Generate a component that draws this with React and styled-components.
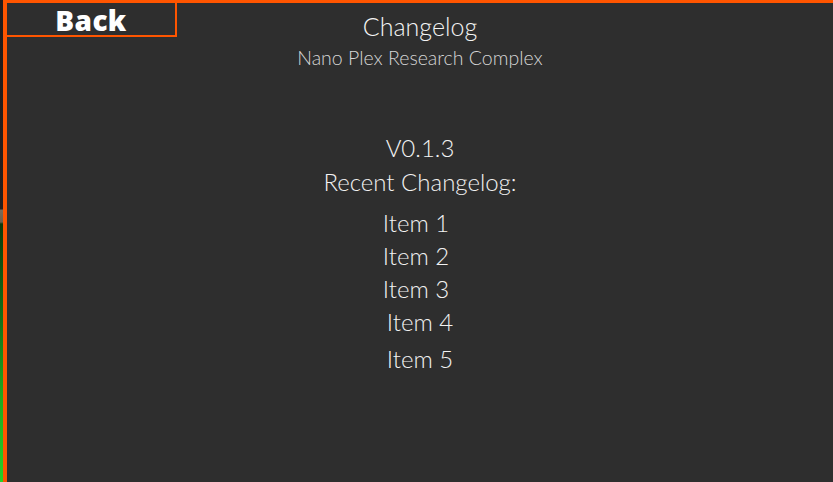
import React from "react";
import styled, { createGlobalStyle } from "styled-components";

const Global = createGlobalStyle`
  html, body { margin: 0; padding: 0; height: 100%; background: #1d1b1b; overflow: hidden; }
  #root { height: 100%; }
`;

const Page = styled.div`
  display: flex;
  height: 482px;
  width: 833px;
`;

const Scene = styled.div`
  width: 3px;
  flex: none;
  background: linear-gradient(
    to bottom,
    #1f1c1c 0,
    #221f1f 209px,
    #786c5a 210px,
    #6b604e 222px,
    #0c3a0c 224px,
    #12701a 320px,
    #1eaa20 400px,
    #26d029 482px
  );
`;

const Panel = styled.div`
  flex: 1;
  box-sizing: border-box;
  border-left: 4px solid #ff5500;
  border-top: 3px solid #ff5500;
  background: #2e2e2e;
  display: flex;
  flex-direction: column;
  color: #f2f2f2;
  font-family: "Source Sans Pro", Lato, "Open Sans", sans-serif;
  font-weight: 300;
`;

const Header = styled.div`
  display: grid;
  grid-template-columns: 1fr auto 1fr;
  align-items: start;
`;

const BackButton = styled.button`
  justify-self: start;
  margin-top: -3px;
  box-sizing: border-box;
  width: 170px;
  height: 37px;
  padding: 0;
  background: transparent;
  border: none;
  border-right: 2px solid #ff5500;
  border-bottom: 2px solid #ff5500;
  color: #ffffff;
  font-family: "Open Sans", sans-serif;
  font-weight: 800;
  font-size: 28px;
  line-height: 40px;
  letter-spacing: 0.4px;
  cursor: pointer;
`;

const TitleBlock = styled.div`
  display: flex;
  flex-direction: column;
  align-items: center;
  padding-top: 8px;
`;

const Title = styled.div`
  font-size: 25px;
  line-height: 30px;
  color: #f4f4f4;
`;

const Subtitle = styled.div`
  font-size: 19.5px;
  line-height: 24px;
  margin-top: 5px;
  color: #d6d6d6;
`;

const Content = styled.div`
  display: flex;
  flex-direction: column;
  align-items: center;
  margin-top: 61px;
`;

const Line = styled.div`
  font-size: 24px;
  line-height: 34px;
  color: #f2f2f2;
  margin-top: ${(p) => p.$mt || 0}px;
  transform: translateX(${(p) => p.$shift || 0}px);
`;

const items = [
  { text: "Item 1", mt: 7, shift: -4 },
  { text: "Item 2", mt: -1, shift: -4 },
  { text: "Item 3", mt: -1, shift: -4 },
  { text: "Item 4", mt: -1, shift: 0 },
  { text: "Item 5", mt: 3, shift: 0 },
];

export default function App() {
  return (
    <Page>
      <Global />
      <Scene />
      <Panel>
        <Header>
          <BackButton>Back</BackButton>
          <TitleBlock>
            <Title>Changelog</Title>
            <Subtitle>Nano Plex Research Complex</Subtitle>
          </TitleBlock>
          <div />
        </Header>
        <Content>
          <Line>V0.1.3</Line>
          <Line>Recent Changelog:</Line>
          {items.map((it) => (
            <Line key={it.text} $mt={it.mt} $shift={it.shift}>
              {it.text}
            </Line>
          ))}
        </Content>
      </Panel>
    </Page>
  );
}
